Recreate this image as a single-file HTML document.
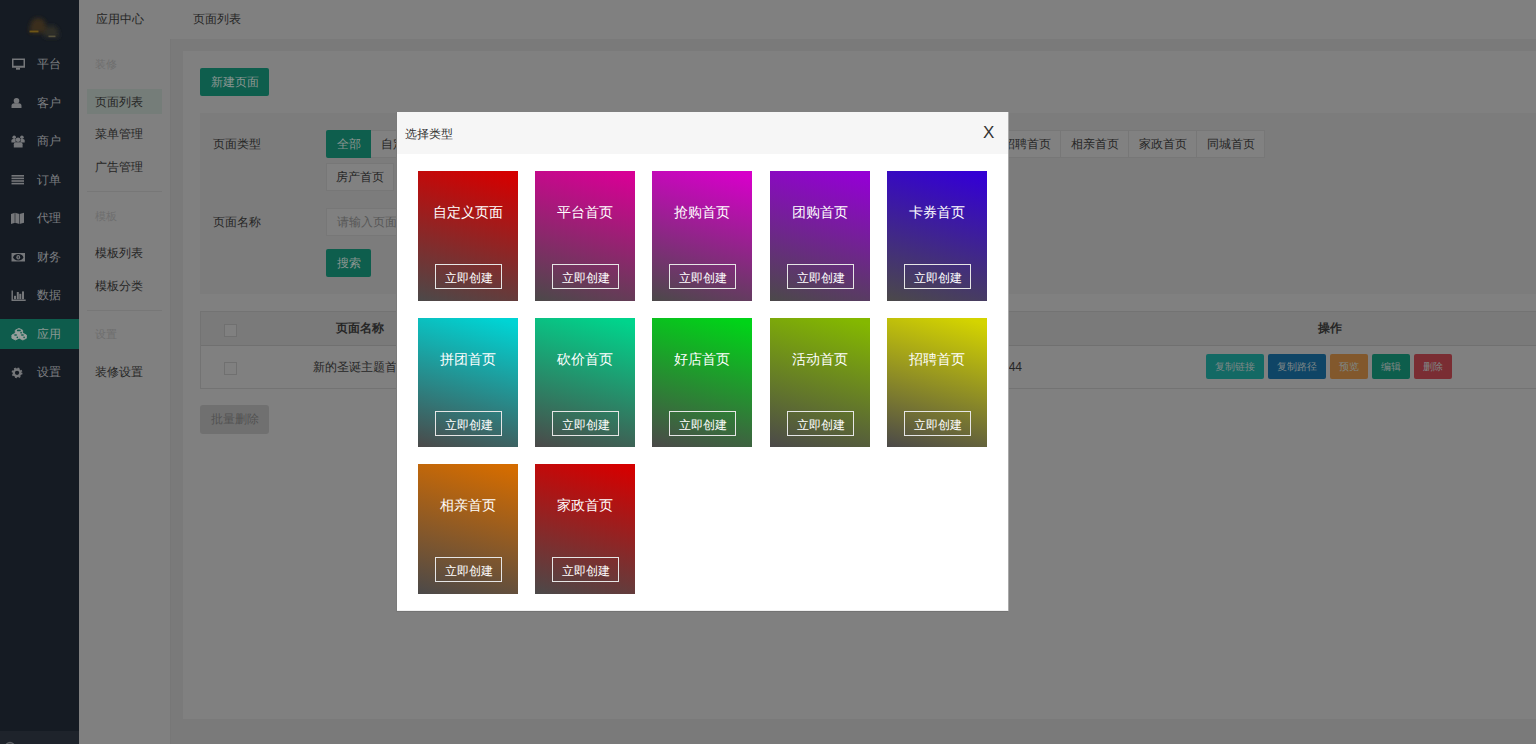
<!DOCTYPE html>
<html><head><meta charset="utf-8">
<style>
*{margin:0;padding:0;box-sizing:border-box}
html,body{width:1536px;height:744px;overflow:hidden;background:#7a7a7a;font-family:"Liberation Sans",sans-serif;font-size:12px;color:#262626}
.a{position:absolute}
.t{position:absolute;white-space:nowrap;line-height:1}
#side{left:0;top:0;width:79px;height:744px;background:#151b23}
#sidebot{left:0;top:731px;width:79px;height:13px;background:#1e232b}
.mi{position:absolute;left:0;width:79px;height:30px;color:#7d7f82}
.mi .ic{position:absolute;left:11px;top:9px;width:14px;height:12px}
.mi span{position:absolute;left:37px;top:9px;font-size:12px;line-height:12px}
.mi.on{background:#0e5c4c}
#hdr{left:79px;top:0;width:1457px;height:39px;background:#808080}
#sub{left:79px;top:39px;width:92px;height:705px;background:#808080;border-right:1px solid #777}
#gut{left:171px;top:39px;width:1365px;height:705px;background:#7a7a7a}
#panel{left:183px;top:51px;width:1353px;height:668px;background:#808080}
.sl{position:absolute;white-space:nowrap;left:95px;font-size:11px;color:#6e6e6e;line-height:11px}
.si{position:absolute;white-space:nowrap;left:95px;font-size:12px;color:#262626;line-height:12px}
.div{position:absolute;left:87px;width:75px;height:1px;background:#777}
.btn{position:absolute;background:#0e5e4d;color:#8a9591;border-radius:2px;text-align:center;font-size:12px}
#filter{left:200px;top:113px;width:1336px;height:181px;background:#7c7c7c}
.tab{position:absolute;top:130px;height:28px;background:#818181;border:1px solid #777;border-left:none;font-size:12px;line-height:26px;text-align:center;color:#262626}
#tbl{left:200px;top:311px;width:1336px;height:78px;border:1px solid #737373;border-right:none;background:#808080}
#thd{left:0;top:0;width:1336px;height:34px;background:#7a7a7a;border-bottom:1px solid #707070}
.cb{position:absolute;width:13px;height:13px;border:1px solid #707070;background:#808080}
.ob{position:absolute;top:354px;height:25px;border-radius:2px;color:#7f8786;font-size:10px;line-height:25px;text-align:center}
/* modal */
#modal{left:397px;top:112px;width:611px;height:498px;background:#fff}
#mtitle{left:0;top:0;width:611px;height:42px;background:#f6f6f6}
.card{position:absolute;width:100px;height:130px;color:#fff}
.card .nm{position:absolute;left:0;top:34px;width:100px;text-align:center;font-size:14px;line-height:14px}
.card .cr{position:absolute;left:17px;top:93px;width:67px;height:25px;border:1px solid #e6e6e6;font-size:12px;line-height:26px;text-align:center}
</style></head><body>
<div id="side" class="a">
  <svg class="a" style="left:0;top:0" width="79" height="50" viewBox="0 0 79 50"><defs><filter id="bl" x="-50%" y="-50%" width="200%" height="200%"><feGaussianBlur stdDeviation="2"/></filter><filter id="bl2" x="-50%" y="-50%" width="200%" height="200%"><feGaussianBlur stdDeviation=".7"/></filter></defs>
<g filter="url(#bl)"><path d="M29.5 33 Q29.5 18 38 18 Q45.5 18 46 27 L46 33 Z" fill="#3a2d1b"/><path d="M44 37.5 Q44 25.5 51.5 25.5 Q59 25.5 59 37.5 Z" fill="#2f2d28"/></g>
<g filter="url(#bl2)"><rect x="29.5" y="30.6" width="9" height="1.8" fill="#9a7418" opacity=".6"/><rect x="48.5" y="35.6" width="7" height="1.6" fill="#8a7e58" opacity=".5"/></g></svg>
  <div class="mi on" style="top:319px"></div>
  <div class="mi" style="top:49px"><span>平台</span></div>
  <div class="mi" style="top:88px"><span>客户</span></div>
  <div class="mi" style="top:126px"><span>商户</span></div>
  <div class="mi" style="top:165px"><span>订单</span></div>
  <div class="mi" style="top:203px"><span>代理</span></div>
  <div class="mi" style="top:242px"><span>财务</span></div>
  <div class="mi" style="top:280px"><span>数据</span></div>
  <div class="mi" style="top:319px"><span style="color:#8a9893">应用</span></div>
  <div class="mi" style="top:357px"><span>设置</span></div>
  <svg class="a" style="left:0;top:0" width="78" height="400" viewBox="0 0 78 400">
    <g fill="#75777a">
      <!-- monitor -->
      <path fill-rule="evenodd" d="M12 58.5H25V67.7H12Z M13.5 60H23.5V65.8H13.5Z"/>
      <rect x="16" y="67.7" width="4" height="2"/>
      <!-- person -->
      <circle cx="16.5" cy="100.8" r="2.8"/>
      <path d="M11.5 108 V105.8 Q11.5 103.3 14.2 103.3 H18.8 Q21.5 103.3 21.5 105.8 V108 Z"/>
      <!-- users -->
      <circle cx="14.2" cy="137.2" r="1.8"/>
      <circle cx="21.9" cy="137.2" r="1.8"/>
      <path d="M11.4 142.4 V140.6 Q11.4 139 13 139 H15.6 V142.4 Z"/>
      <path d="M20.5 142.4 V139 H23.1 Q24.7 139 24.7 140.6 V142.4 Z"/>
      <circle cx="18.05" cy="139.8" r="2.3"/>
      <path d="M13.8 147.4 V144.2 Q13.8 142.2 15.8 142.2 H20.6 Q22.6 142.2 22.6 144.2 V147.4 Z"/>
      <!-- list -->
      <rect x="11.5" y="175" width="12.5" height="1.6"/>
      <rect x="11.5" y="177.6" width="12.5" height="1.6"/>
      <rect x="11.5" y="180.2" width="12.5" height="1.6"/>
      <rect x="11.5" y="182.8" width="12.5" height="1.6"/>
      <!-- map -->
      <path d="M11 214 L15 212.7 L19.5 214 L24 212.7 V222.7 L19.5 224 L15 222.7 L11 224 Z"/>
      <!-- money -->
      <rect x="11.5" y="253" width="13.5" height="8.5"/>
      <ellipse cx="18.25" cy="257.25" rx="5" ry="3.2" fill="#151b23"/>
      <ellipse cx="18.25" cy="257.25" rx="1.9" ry="2.3"/>
      <rect x="17.8" y="256.2" width=".9" height="2.1" fill="#151b23"/>
      <!-- bar chart -->
      <path d="M11.5 290.6H12.9V299.6H25.7V301H11.5Z"/>
      <rect x="14" y="295.8" width="2" height="3.4"/>
      <rect x="16.8" y="292" width="2" height="7.2"/>
      <rect x="19.3" y="293.8" width="2" height="5.4"/>
      <rect x="22" y="291.4" width="2" height="7.8"/>
      <!-- gear -->
      <circle cx="17.05" cy="372.8" r="3.3" fill="none" stroke="#75777a" stroke-width="2.3"/>
      <circle cx="17.05" cy="372.8" r="4.7" fill="none" stroke="#75777a" stroke-width="1.5" stroke-dasharray="1.8 1.9"/>
    </g>
    <g fill="#15231f" opacity="1">
      <path d="M15 212.7 V222.7 M19.5 214 V224" stroke="#151b23" stroke-width=".6" fill="none"/>
      
    </g>
    <!-- cubes -->
    <g fill="#98a09d" stroke="#98a09d" stroke-width=".8" stroke-linejoin="round">
      <path d="M18.95 328.4 L22.65 330.2 L22.65 333.99999999999994 L18.95 335.79999999999995 L15.25 333.99999999999994 L15.25 330.2 Z"/>
      <path d="M15.45 333.2 L19.05 335.0 L19.05 338.2 L15.45 340.0 L11.85 338.2 L11.85 335.0 Z"/>
      <path d="M22.85 333.2 L26.450000000000003 335.0 L26.450000000000003 338.2 L22.85 340.0 L19.25 338.2 L19.25 335.0 Z"/>
    </g>
    <g fill="#0e5c4c">
      <ellipse cx="18.9" cy="330.4" rx="2.1" ry=".85"/>
      <ellipse cx="15.6" cy="335" rx="1.6" ry=".8"/>
      <ellipse cx="22.4" cy="335" rx="1.6" ry=".8"/>
      <ellipse cx="21.1" cy="332.7" rx=".8" ry=".9"/>
      <ellipse cx="17.3" cy="337.3" rx=".8" ry=".9"/>
      <ellipse cx="24.1" cy="337.3" rx=".8" ry=".9"/>
    </g>
  </svg>
  <div id="sidebot" class="a"><svg class="a" style="left:0;top:0" width="79" height="14"><circle cx="10" cy="16" r="4.3" fill="none" stroke="#5c5f64" stroke-width="1.7"/></svg></div>
</div>
<div id="hdr" class="a">
  <div class="t" style="left:17px;top:13px">应用中心</div>
  <div class="t" style="left:114px;top:13px">页面列表</div>
</div>
<div id="sub" class="a"></div>
<div id="gut" class="a"></div>
<div id="subc" class="a" style="left:0;top:0;width:200px;height:400px">
  <div class="sl" style="top:59px">装修</div>
  <div class="a" style="left:87px;top:89px;width:75px;height:25px;background:#757d79"></div>
  <div class="si" style="top:96px">页面列表</div>
  <div class="si" style="top:128px">菜单管理</div>
  <div class="si" style="top:161px">广告管理</div>
  <div class="div" style="top:191px"></div>
  <div class="sl" style="top:211px">模板</div>
  <div class="si" style="top:247px">模板列表</div>
  <div class="si" style="top:280px">模板分类</div>
  <div class="div" style="top:310px"></div>
  <div class="sl" style="top:329px">设置</div>
  <div class="si" style="top:366px">装修设置</div>
</div>
<div id="panel" class="a"></div>
<div class="btn" style="left:200px;top:68px;width:69px;height:28px;line-height:28px">新建页面</div>
<div id="filter" class="a"></div>
<div class="t" style="left:213px;top:138px">页面类型</div>
<div class="btn" style="left:326px;top:130px;width:45px;height:28px;line-height:28px;border-radius:2px 0 0 2px">全部</div>
<div class="tab" style="left:371px;width:78px;padding-left:2px">自定义页面</div>
<div class="tab" style="left:449px;width:68px">平台首页</div>
<div class="tab" style="left:517px;width:68px">抢购首页</div>
<div class="tab" style="left:585px;width:68px">团购首页</div>
<div class="tab" style="left:653px;width:68px">卡券首页</div>
<div class="tab" style="left:721px;width:68px">拼团首页</div>
<div class="tab" style="left:789px;width:68px">砍价首页</div>
<div class="tab" style="left:857px;width:68px">好店首页</div>
<div class="tab" style="left:925px;width:68px">活动首页</div>
<div class="tab" style="left:993px;width:68px">招聘首页</div>
<div class="tab" style="left:1061px;width:68px">相亲首页</div>
<div class="tab" style="left:1129px;width:68px">家政首页</div>
<div class="tab" style="left:1197px;width:68px">同城首页</div>
<div class="tab" style="left:326px;top:163px;width:68px;border-left:1px solid #777">房产首页</div>
<div class="t" style="left:213px;top:216px">页面名称</div>
<div class="a" style="left:326px;top:208px;width:300px;height:28px;background:#808080;border:1px solid #777"></div>
<div class="t" style="left:337px;top:216px;color:#575757">请输入页面名称</div>
<div class="btn" style="left:326px;top:249px;width:45px;height:28px;line-height:28px">搜索</div>
<div id="tbl" class="a">
  <div id="thd" class="a"></div>
  <div class="cb" style="left:23px;top:12px"></div>
  <div class="cb" style="left:23px;top:50px"></div>
  <div class="t" style="left:135px;top:10px;font-weight:bold">页面名称</div>
  <div class="t" style="left:112px;top:49px">新的圣诞主题首页</div>
  <div class="t" style="right:514px;top:49px">2022-12-24 12:12:44</div>
  <div class="t" style="left:1117px;top:10px;font-weight:bold">操作</div>
</div>
<div class="ob" style="left:1206px;width:58px;background:#136964">复制链接</div>
<div class="ob" style="left:1268px;width:58px;background:#0f4566">复制路径</div>
<div class="ob" style="left:1330px;width:38px;background:#82582c">预览</div>
<div class="ob" style="left:1372px;width:38px;background:#0d5e4c">编辑</div>
<div class="ob" style="left:1414px;width:38px;background:#7a2d33">删除</div>
<div class="a" style="left:200px;top:405px;width:69px;height:29px;background:#707070;border-radius:3px;color:#525252;text-align:center;line-height:29px">批量删除</div>

<div class="a" style="left:396px;top:112px;width:1px;height:500px;background:#7a7a7a"></div><div class="a" style="left:397px;top:611px;width:611px;height:1px;background:#737373"></div><div class="a" style="left:1008px;top:112px;width:1px;height:499px;background:#a9a9a9"></div><div class="a" style="left:397px;top:610px;width:611px;height:1px;background:#f0f0f0"></div>
<div id="modal" class="a">
  <div id="mtitle" class="a">
    <div class="t" style="left:8px;top:16px;color:#333">选择类型</div>
    <div class="t" style="left:586px;top:12px;color:#333;font-size:17px">X</div>
  </div>
  <div class="card" style="left:21px;top:59px;background:linear-gradient(15.5deg,#4b4949 0%,#d40000 96%)"><div class="nm">自定义页面</div><div class="cr">立即创建</div></div>
  <div class="card" style="left:138px;top:59px;background:linear-gradient(15.5deg,#4b4949 0%,#d70095 96%)"><div class="nm">平台首页</div><div class="cr">立即创建</div></div>
  <div class="card" style="left:255px;top:59px;background:linear-gradient(15.5deg,#4b4949 0%,#d600c9 96%)"><div class="nm">抢购首页</div><div class="cr">立即创建</div></div>
  <div class="card" style="left:373px;top:59px;background:linear-gradient(15.5deg,#4b4949 0%,#9400d4 96%)"><div class="nm">团购首页</div><div class="cr">立即创建</div></div>
  <div class="card" style="left:490px;top:59px;background:linear-gradient(15.5deg,#4b4949 0%,#3400d4 96%)"><div class="nm">卡券首页</div><div class="cr">立即创建</div></div>
  <div class="card" style="left:21px;top:206px;height:129px;background:linear-gradient(15.5deg,#4b4949 0%,#00d4d4 96%)"><div class="nm">拼团首页</div><div class="cr">立即创建</div></div>
  <div class="card" style="left:138px;top:206px;height:129px;background:linear-gradient(15.5deg,#4b4949 0%,#00d48c 96%)"><div class="nm">砍价首页</div><div class="cr">立即创建</div></div>
  <div class="card" style="left:255px;top:206px;height:129px;background:linear-gradient(15.5deg,#4b4949 0%,#00d418 96%)"><div class="nm">好店首页</div><div class="cr">立即创建</div></div>
  <div class="card" style="left:373px;top:206px;height:129px;background:linear-gradient(15.5deg,#4b4949 0%,#84b800 96%)"><div class="nm">活动首页</div><div class="cr">立即创建</div></div>
  <div class="card" style="left:490px;top:206px;height:129px;background:linear-gradient(15.5deg,#4b4949 0%,#d4d400 96%)"><div class="nm">招聘首页</div><div class="cr">立即创建</div></div>
  <div class="card" style="left:21px;top:352px;background:linear-gradient(15.5deg,#4b4949 0%,#d46c00 96%)"><div class="nm">相亲首页</div><div class="cr">立即创建</div></div>
  <div class="card" style="left:138px;top:352px;background:linear-gradient(15.5deg,#4b4949 0%,#d40000 96%)"><div class="nm">家政首页</div><div class="cr">立即创建</div></div>
</div>
</body></html>
